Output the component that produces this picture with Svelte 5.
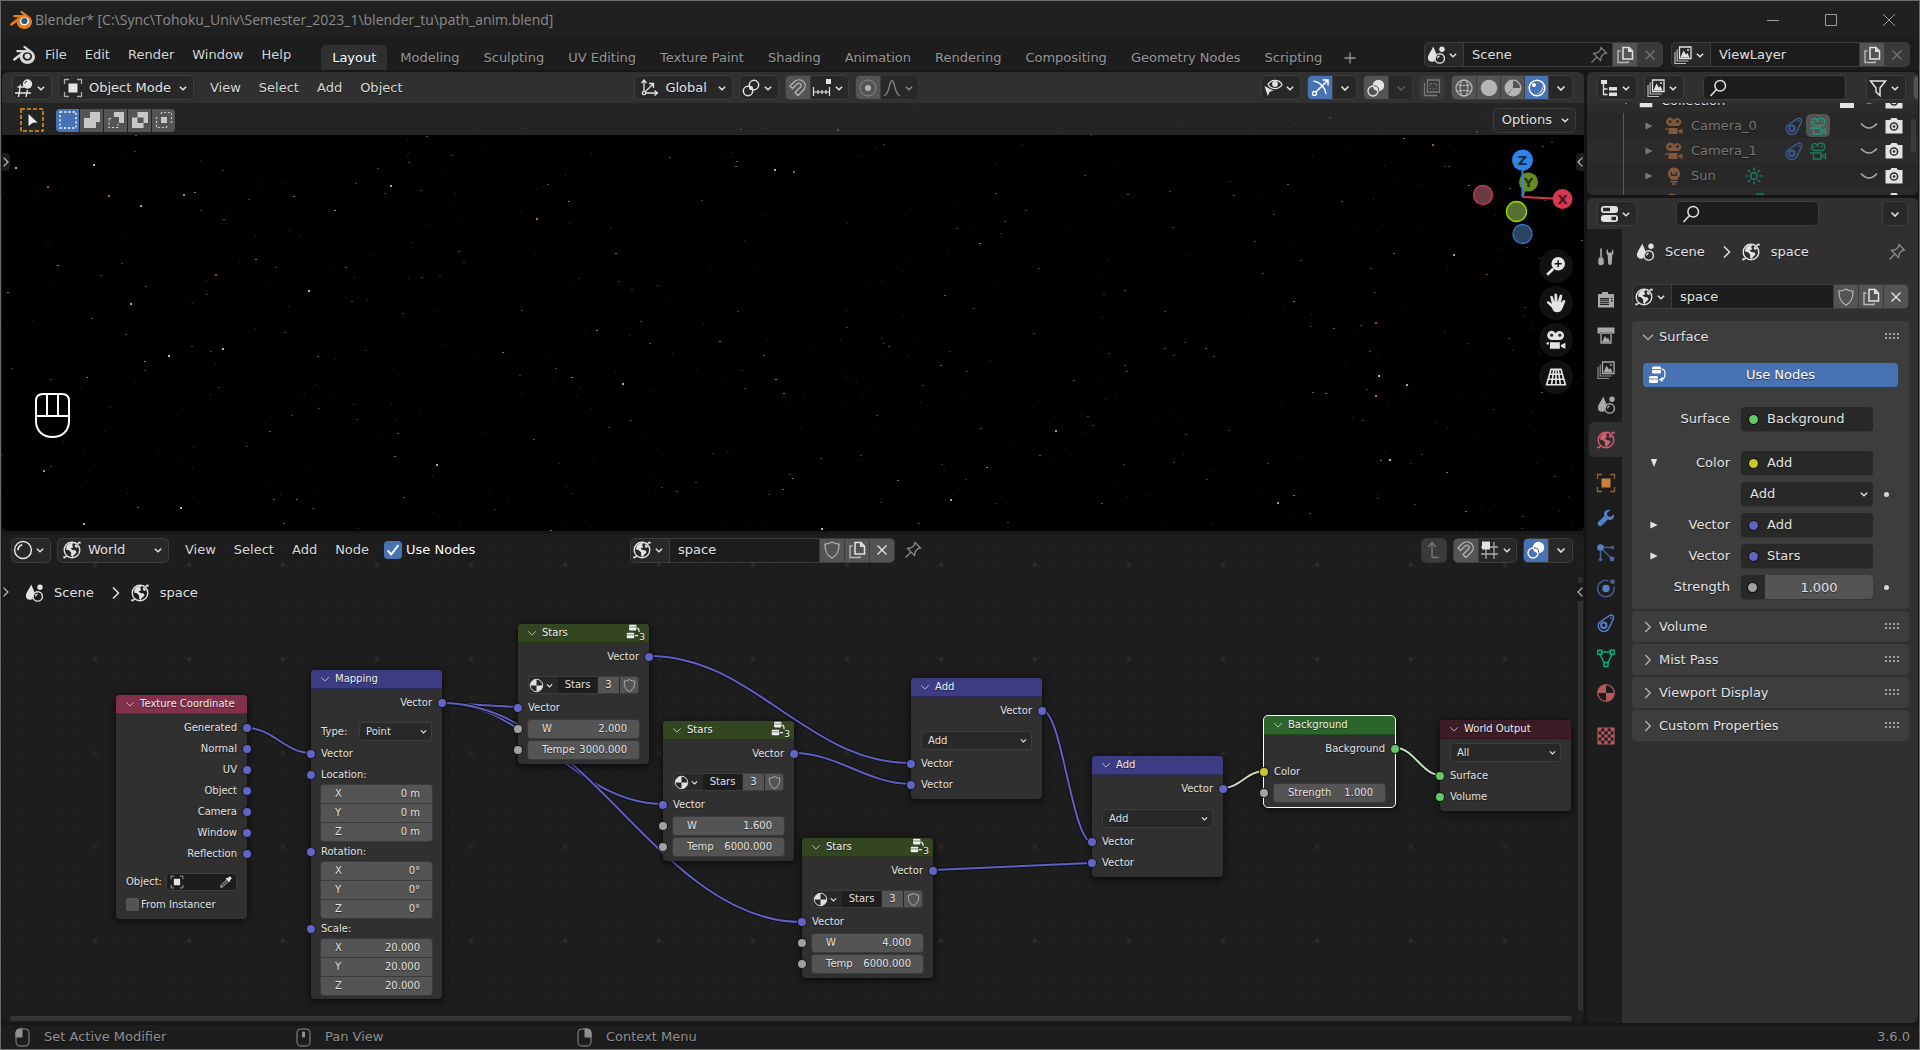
<script>
  const BLENDER =
    '<path d="M12.51 13.214c.046-.8.438-1.506 1.03-2.006a3.424 3.424 0 0 1 2.212-.79c.85 0 1.631.3 2.211.79.592.5.983 1.206 1.028 2.005.045.823-.285 1.586-.865 2.153a3.389 3.389 0 0 1-2.374.938 3.393 3.393 0 0 1-2.376-.938c-.58-.567-.91-1.33-.865-2.152M7.35 14.831c.006.314.106.922.256 1.398a7.372 7.372 0 0 0 1.593 2.757 8.227 8.227 0 0 0 2.787 2.001 8.947 8.947 0 0 0 3.66.76 8.964 8.964 0 0 0 3.657-.772 8.285 8.285 0 0 0 2.785-2.01 7.428 7.428 0 0 0 1.592-2.762 6.964 6.964 0 0 0 .25-3.074 7.123 7.123 0 0 0-1.016-2.779 7.764 7.764 0 0 0-1.852-2.043h.002L13.566 2.55l-.02-.015c-.492-.378-1.319-.376-1.86.002-.547.382-.609 1.015-.123 1.415l-.001.001 3.126 2.543-9.53.01h-.013c-.788.001-1.545.518-1.695 1.172-.154.665.38 1.217 1.2 1.22V8.9l4.83-.01-8.62 6.617-.034.025c-.813.622-1.075 1.658-.563 2.313.52.667 1.625.668 2.447.004L7.414 14s-.069.52-.063.831zm12.09 1.741c-.97.988-2.326 1.548-3.795 1.55-1.47.004-2.827-.552-3.797-1.538a4.51 4.51 0 0 1-1.036-1.622 4.282 4.282 0 0 1 .282-3.519 4.702 4.702 0 0 1 1.153-1.371c.942-.768 2.141-1.183 3.396-1.185 1.256-.002 2.455.41 3.398 1.175.48.391.87.854 1.152 1.367a4.28 4.28 0 0 1 .522 1.706 4.236 4.236 0 0 1-.239 1.811 4.54 4.54 0 0 1-1.035 1.626"';
  const L = 'fill="none" stroke="currentColor"';
  const F = 'fill="currentColor" stroke="none"';

  // 20 x 20 icon set
  const icons = {
    blender: `<g transform="scale(.833)">${BLENDER} fill="currentColor"/></g>`,
    blenderColor: `<g transform="scale(.833)"><circle cx="15.7" cy="13.1" r="5.5" fill="#f4f4f4"/>${BLENDER} fill="#ee7d11"/><circle cx="15.7" cy="13.2" r="3.3" fill="#265787"/></g>`,
    down: `<path d="M6.500 8.500 10 12l3.500-3.500" ${L} stroke-width="1.600"/>`,
    fold: `<path d="M4.500 7.500 10 13l5.500-5.500" ${L} stroke-width="1.400"/>`,
    right: `<path d="M7 4.500 12.500 10 7 15.500" ${L} stroke-width="1.500"/>`,
    left: `<path d="M13 4.500 7.500 10l5.500 5.500" ${L} stroke-width="1.500"/>`,
    triRight: `<path d="M5.500 5.500v9l9-4.500z" ${F}/>`,
    triDown: `<path d="M6 5h8l-4 10z" ${F}/>`,
    close: `<path d="m5 5 10 10M15 5 5 15" ${L} stroke-width="1.500"/>`,
    plus: `<path d="M10 4.500v11M4.500 10h11" ${L} stroke-width="1.300"/>`,
    scene: `<path d="M7.200 1.500C8.800 5.500 11 8.800 10.600 11.800c-1.400.9-2.100 2.500-1.900 4.500C4.800 17.600 1.800 16 1.900 12.700 2.100 9.200 5.700 5.500 7.200 1.500z" ${F}/><circle cx="16" cy="4.300" r="2.700" ${F}/><circle cx="13.700" cy="13.400" r="4.700" ${L} stroke-width="1.400"/><path d="M11.600 13.400a2.200 2.200 0 0 1 2-2.200" ${L} stroke-width="1.200"/>`,
    world: `<circle cx="10" cy="10" r="7.800" ${L} stroke-width="1.400"/><path d="M4.400 6.500C6 3.800 8.500 2.800 11 3.200l-.8 2 1 2-2.700 1.200 2 1.600 3.200.5.800 2-2.300 2.200-1.700 2.400-1.500-1.700.2-3-2.600-2.300-2.400-.4zM13.500 4.200l2.700 2.600-2 1.200-1.600-1.700z" ${F}/><path d="M15.300 4c1.800-2.200 3.600-2.600 2.400-.2M4.700 16C3 17.900.9 18.700 2.300 16.200" ${L} stroke-width="1.300"/>`,
    grid3d: `<path d="M3.500 9H10M1 15h16M6.500 6.500 4.500 19M13.500 12l-1.500 7" ${L} stroke-width="1.400"/><circle cx="13.500" cy="6" r="4.700" ${F}/><path d="M10.800 5.500q.5-2 2.200-2.300" fill="none" stroke="#282828" stroke-width="1"/>`,
    object: `<path d="M5.500 5.500h9v9h-9z" ${F}/><path d="M1.500 6V1.500H6M14 1.500h4.500V6M18.500 14v4.500H14M6 18.500H1.500V14" ${L} stroke-width="1.300" opacity=".7"/>`,
    axes: `<path d="M5 15V2.500M2.500 5 5 2l2.500 3M5 15h13M15.500 12.500 18.500 15l-3 2.500M6.500 13.500 14 6M10 5.500h4.500V10" ${L} stroke-width="1.300"/><circle cx="5" cy="15" r="1.700" fill="#282828" stroke="currentColor" stroke-width="1.300"/>`,
    pivot: `<circle cx="13" cy="7" r="4.700" ${L} stroke-width="1.500"/><circle cx="7" cy="13" r="4.700" ${L} stroke-width="1.500"/><circle cx="10" cy="10" r="2" ${F}/>`,
    magnet: `<path d="m2 8 4.500-4.500c6-5 14.500 2 9 8.500L10 17.500 7 14.500l5.500-5.500c2-2.800-1-5-3.200-3.200L4.500 10.500z" ${L} stroke-width="1.300"/>`,
    snap: `<path d="M1.500 9v9M6 12v4M10 12v4M14 12v4M17.500 9v9M1.500 14h16" ${L} stroke-width="1.200"/><path d="M14 1h5v5h-5z" ${F}/>`,
    propEdit: `<circle cx="10" cy="10" r="8" ${L} stroke-width="1.300" opacity=".4"/><circle cx="10" cy="10" r="3" ${F}/>`,
    falloff: `<path d="M2 17.500C7.500 17.500 7 2.500 10 2.500s2.500 15 8 15" ${L} stroke-width="1.300"/>`,
    visible: `<path d="M5 6.500c3-5.500 11-5.500 14 0-3 5.500-11 5.500-14 0z" ${L} stroke-width="1.400"/><circle cx="12" cy="6" r="2.900" ${F}/><path d="m1.500 8 9 4.700-3.800 1-1.900 4.300z" ${F}/>`,
    gizmo: `<circle cx="4.500" cy="15.500" r="2" ${L} stroke-width="1.400"/><path d="M6 14 17.500 2.500M12.500 2H18v5.500M3.500 3c6.500 1 11.500 6 12.500 13" ${L} stroke-width="1.500"/>`,
    overlay: `<circle cx="12.500" cy="7.500" r="5.700" ${F}/><circle cx="7" cy="13" r="5" ${L} stroke-width="1.400"/><path d="M8 7.800c3.500 0 4.800 2 4.600 4.800" fill="none" stroke="#4a4a4a" stroke-width="1"/>`,
    xray: `<path d="M5.500 2h12v12h-12z" ${L} stroke-width="1.300"/><path d="M2.500 5v12.500H15" ${L} stroke-width="1.300"/><path d="M8 5.500h6.500V11H8z" ${L} stroke-width="1" stroke-dasharray="2 1.500"/>`,
    wire: `<circle cx="10" cy="10" r="8" ${L} stroke-width="1.300"/><ellipse cx="10" cy="10" rx="4" ry="8" ${L} stroke-width="1.200"/><path d="M3 6.500q7 2 14 0M2.500 13.500q7.500-2 15 0" ${L} stroke-width="1.200"/>`,
    solid: `<circle cx="10" cy="10" r="8.300" ${F}/>`,
    matprev: `<circle cx="10" cy="10" r="7.800" ${L} stroke-width="1.300"/><path d="M10 2.500A7.500 7.500 0 0 0 4.500 15.500L10 10zM10 10h7.500a7.500 7.500 0 0 1-12 6z" ${F}/>`,
    rendered: `<circle cx="10" cy="10" r="7.800" ${L} stroke-width="1.500"/><circle cx="7" cy="7" r="2" ${F}/><path d="M16 6c1.500 5-2 10.500-8.500 10.500 5-.5 8.500-4.500 8.500-10.500z" ${F}/>`,
    duplicate: `<path d="M8 2.500h6L17.500 6v8H8z" ${L} stroke-width="1.500"/><path d="M13 2.500V7h4.500z" ${F}/><path d="M5.500 6H3v11.500h10V16" ${L} stroke-width="1.400" opacity=".7"/>`,
    layers: `<path d="M6.500 2h11.500v11.500H6.500z" ${L} stroke-width="1.300"/><path d="m7.500 12.500 3-7 2.500 4 1.500-1.500 2 4.500z" ${F}/><circle cx="15" cy="5" r="1" ${F}/><path d="M4.200 4.500v11.500H15.500M2 7v11.500h11" ${L} stroke-width="1.200" opacity=".8"/>`,
    pin: `<path d="m12 2.500 5.500 5.500-2.500.5-2.700 3-.8 4L4.500 8.500l4-.8 3-2.700zM8 12l-5.500 5.500" ${L} stroke-width="1.300"/>`,
    outliner: `<path d="M2 2h6v4H2z" ${F}/><path d="M4.500 6v10.500h4M4.500 11h4" ${L} stroke-width="1.300"/><path d="M10 9h8v3.500h-8zM10 14.500h8V18h-8z" ${F}/>`,
    search: `<circle cx="12.200" cy="7.800" r="5.300" ${L} stroke-width="1.500"/><path d="M8.500 11.500 2.500 18" ${L} stroke-width="1.500"/>`,
    filter: `<path d="M2.500 3h15l-5.500 7v7.500L8 14v-4z" ${L} stroke-width="1.500"/>`,
    newcol: `<path d="M3 3h6v5H3zM5 8v9h9M12 12h6v6h-6z" ${L} stroke-width="1.500"/>`,
    boxicon: `<path d="M2 3h16v3H2zM3 7h14v10H3z" ${F}/>`,
    movie: `<path d="M6 1.500a4 4 0 0 1 3.700 2.300A4.100 4.100 0 1 1 14 10H6.500A4.200 4.200 0 0 1 6 1.500zM4.500 12h9v6h-9zM14.500 14.500l4-2v5.500l-4-1.800zM1.500 12h2v2h-2z" ${F}/><circle cx="6" cy="5.600" r="1.400" fill="#2b2b2b"/><circle cx="13.500" cy="5.600" r="1.400" fill="#2b2b2b"/>`,
    movieLine: `<path d="M6 2.500a3.500 3.500 0 0 1 3.500 2.500A3.700 3.700 0 1 1 14 9.500H6.500A3.600 3.600 0 0 1 6 2.500zM5.500 12h7.500v6H5.500zM13.500 15l4-2v4.500l-4-2zM2 12h3" ${L} stroke-width="1.300"/><circle cx="6" cy="6" r="1" ${F}/><circle cx="13.500" cy="5.600" r="1" ${F}/>`,
    constraint: `<path d="M3.200 9.500 13.500 2.600c3-1.600 5 .8 3.800 3.500L12.500 16A5.600 5.600 0 0 1 3.200 9.500z" ${L} stroke-width="1.400"/><circle cx="7.800" cy="12.200" r="2.700" ${L} stroke-width="2"/><circle cx="15" cy="4.900" r=".9" ${F}/>`,
    bulb: `<path d="M10 1.500a6.200 6.200 0 0 1 3.800 11l-.8 1.500H7l-.8-1.500A6.200 6.200 0 0 1 10 1.500zM6.500 15h7v1.400h-7zM8 17.300h4v1.500H8z" ${F}/><path d="M7.500 6v3.500h5V6M9.200 9.500V8M10.800 9.500V8" fill="none" stroke="#2b2b2b" stroke-width="1.200"/>`,
    sun: `<circle cx="10" cy="10" r="3.300" ${L} stroke-width="1.500"/><path d="M10 1.500v3M10 15.500v3M1.500 10h3M15.500 10h3M4 4l2 2M14 14l2 2M16 4l-2 2M6 14l-2 2" ${L} stroke-width="1.600"/>`,
    arc: `<path d="M5 3c8-1 11 3 11 9l-4 4c1-7-2-9-7-9z" ${F}/>`,
    curve: `<path d="M4 3h6v4H4zM10 5c5 0 6 3 6 9M14 8h4v5" ${L} stroke-width="1.500"/>`,
    closedEye: `<path d="M2 7.500q8 9 16 0" ${L} stroke-width="1.600"/>`,
    photo: `<path d="M1.500 4h4.500L7.500 2h5L14 4h4.500v13.500h-17z" ${F}/><circle cx="10" cy="10.500" r="3.600" fill="none" stroke="#2b2b2b" stroke-width="1.500"/><circle cx="10" cy="10.500" r="1.300" fill="#2b2b2b"/>`,
    check: `<path d="m4 10.500 4 4.500 8-10.500" ${L} stroke-width="2.200"/>`,
    props: `<rect x="2" y="2" width="17" height="7" rx="3" ${F}/><rect x="2" y="11" width="17" height="7" rx="3" ${F}/><path d="M4 3.800h7v3.400H4zM12.500 12.800h4.500v3.400h-4.500z" fill="#282828"/>`,
    shield: `<path d="M10 2c2.500 1.700 4.500 2 7 2.200 0 7-1.500 11-7 14-5.500-3-7-7-7-14C5.500 4 7.500 3.700 10 2z" ${L} stroke-width="1.300"/>`,
    nodes: `<rect x="5" y="1.500" width="9" height="7" rx="1.500" ${F}/><rect x="2" y="11" width="9" height="7" rx="1.500" ${F}/><path d="M5 4.500h9M2 14h9" stroke="#444" stroke-width=".7"/><path d="M14.500 4c3 0 3.500 1.500 3.500 4.500 0 4-1 6-3.500 6.500M12 14.500h3.500M16 12.500l-3 2 2.500 2" ${L} stroke-width="1.200"/>`,
    nodetree: `<rect x="4" y="1" width="10" height="7.500" rx="1.500" ${F}/><rect x="1" y="11.500" width="10" height="7.500" rx="1.500" ${F}/><path d="M4 4h10M1 14.500h10" stroke="#344621" stroke-width=".8"/><path d="M15 5.500q2.500.5 2.500 5M12 15.500h4" ${L} stroke-width="1.500"/>`,
    tool: `<path d="M5 1.500v9" ${L} stroke-width="1.600"/><path d="M3 10.500h4l.7 2.500v4q-2.700 2.500-5.400 0v-4zM12 2v3.500h4V2q3 3 .2 6.500L15.800 17q-1.800 2.300-3.600 0l-.5-8.500Q9 5 12 2z" ${F}/>`,
    render: `<path d="M6 2h6v2h6v13.500H2V4h4z" ${F}/><path d="M4 8h9v7H4z" fill="#1d1d1d"/><path d="M4 9.800h9M4 11.600h9M4 13.400h9" stroke="currentColor" stroke-width=".8"/><path d="M15 8.500h1.500M15 11h1.500" stroke="#1d1d1d" stroke-width="1.500"/>`,
    output: `<path d="M1.500 2.500h17v6h-2.500V7H4v1.500H1.500z" ${F}/><path d="M5 8h10v10H5z" ${L} stroke-width="1.300"/><path d="m6 17 3-6 2 3 1-1.500 2 4.500z" ${F}/>`,
    wrench: `<path d="M17.800 6.500 14.500 9l-3-1-.5-3 3.300-2.800C10.500.8 7 4 8.300 8L2.200 14c-1.800 2.400 1 5.500 3.600 3.600L11.800 11.500c4.200 1.500 7-1.500 6-5z" ${F}/>`,
    particles: `<circle cx="4.500" cy="4.500" r="3.300" ${F}/><path d="M7 4.500h8M4.500 7v8M7 7l8.500 8.500" ${L} stroke-width="1.400" opacity=".7"/><circle cx="16.500" cy="4.500" r="1.800" ${F} opacity=".7"/><circle cx="4.500" cy="16.500" r="1.800" ${F} opacity=".7"/><circle cx="16" cy="16" r="2.400" ${F} opacity=".8"/>`,
    physics: `<circle cx="10" cy="10.500" r="3.700" ${F}/><path d="M12.500 2.800A8.200 8.200 0 1 0 17.800 8.500" ${L} stroke-width="1.400" opacity=".7"/><circle cx="16.500" cy="3.700" r="2.300" ${F} opacity=".7"/>`,
    mesh: `<path d="M5.500 4h9M4 6.500l4.500 9M16 6.500l-4.500 9" ${L} stroke-width="1.400"/><path d="M1.800 2.200h4v4h-4zM14.200 2.200h4v4h-4zM8 14.500h4v4H8z" ${L} stroke-width="1.400"/>`,
    material: `<circle cx="10" cy="10" r="8.300" ${L} stroke-width="1.300"/><path d="M10 2v8H2a8 8 0 0 1 8-8zM10 10h8a8 8 0 0 1-8 8z" ${F}/>`,
    texture: `<path d="M2 2h16v16H2z" ${L} stroke-width="1.200"/><path d="M2 2h3.200v3.200H2zM8.400 2h3.200v3.200H8.400zM14.800 2H18v3.200h-3.200zM5.200 5.200h3.200v3.200H5.200zM11.600 5.200h3.200v3.200h-3.200zM2 8.400h3.200v3.200H2zM8.400 8.400h3.200v3.200H8.400zM14.800 8.400H18v3.200h-3.200zM5.200 11.600h3.200v3.200H5.200zM11.600 11.600h3.200v3.200h-3.200zM2 14.800h3.200V18H2zM8.400 14.800h3.200V18H8.400zM14.800 14.800H18V18h-3.200z" ${F}/>`,
    shader: `<circle cx="10" cy="10" r="8.400" ${L} stroke-width="1.500"/><path d="M5 9.500Q5.500 6 8.500 5" ${L} stroke-width="1.800" stroke-linecap="round"/>`,
    up: `<path d="M8 17.500V3M4 7l4-4.500L12 7M8 17.500h6.500" ${L} stroke-width="1.400"/>`,
    gridSnap: `<path d="M1 7h17M1 14h17M6 8v11M14 2v17" ${L} stroke-width="1.300" opacity=".7"/><path d="M2 1.500h8v8H2z" ${F}/>`,
    dropper: `<path d="M12 4.500 15 2q3 0 3 3l-2.500 3 .5 1-1.500 1.500-5-5L11 4z" ${F}/><path d="m11 7-8 8-.5 2.500L5 17l8-8" ${L} stroke-width="1.300"/>`,
    zoom: `<circle cx="12" cy="8" r="6.200" ${F}/><path d="m7.500 12.500-5.500 5.500" ${L} stroke-width="2.400"/><path d="M12 4.800v6.400M8.800 8h6.400" stroke="#111" stroke-width="1.300"/>`,
    hand: `<path d="M6.500 14.500 1.500 9.500q.8-1.800 2.800-.3L6.300 11 4.700 4q1.500-1.500 2.300.2L8.700 9 8.600 2q1.200-1.400 2.300 0l.6 7L13.500 2.800q1.500-1.200 2.200.4L14.500 10l2-2.500q1.700-.8 2 1L16 14.500q-1.500 4-5 4-3.500 0-4.500-4z" ${F}/>`,
    persp: `<path d="M5.500 3h9l4 14h-17zM10 3v14M4 7.500h12M3 12h14M8 3 6 17M12 3l2 14" ${L} stroke-width="1.500"/>`,
    selSet: `<path d="M2 2h16v16H2z" ${L} stroke-width="1.300" stroke-dasharray="2.200 2"/>`,
    selAdd: `<path d="M8 2h10v10h-4v6H2V8h6z" ${F}/>`,
    selSub: `<path d="M8 2h10v11h-5V7H8z" ${F}/><path d="M3 8.500v9h9V14M3 8.500h3" ${L} stroke-width="1.200" stroke-dasharray="2.200 1.800"/>`,
    selXor: `<path fill-rule="evenodd" d="M7.500 2H18v11h-4.500v5H2V7.500h5.500zM7.500 7.500V13h6V7.500z" ${F}/>`,
    selAnd: `<path d="M7 7h6v6H7z" ${F}/><path d="M7.500 4V2.500h10v10H16M12.500 16v1.500h-10v-10H4" ${L} stroke-width="1.200" stroke-dasharray="2.200 1.800"/>`
  };

  const menus = ['File', 'Edit', 'Render', 'Window', 'Help'];
  const workspaces = ['Layout', 'Modeling', 'Sculpting', 'UV Editing', 'Texture Paint', 'Shading', 'Animation', 'Rendering', 'Compositing', 'Geometry Nodes', 'Scripting'];

  // deterministic star field
  let seed = 77;
  const rnd = () => ((seed = (seed * 16807) % 2147483647) / 2147483647);
  const stars = Array.from({ length: 1500 }, () => {
    const b = rnd();
    const orange = rnd() < 0.25;
    const v = Math.round(26 + 64 * b * b + 100 * b ** 16);
    return {
      x: Math.floor(rnd() * 1900),
      y: Math.floor(rnd() * 620),
      w: b > 0.7 ? 2 : 1,
      h: b > 0.97 ? 2 : 1,
      c: orange ? `rgb(${v},${Math.round(v * 0.6)},${Math.round(v * 0.2)})` : `rgb(${v},${v},${v})`
    };
  });

  const V = '#6363c7', G = '#a1a1a1', Y = '#c7c729', S = '#63c763';
  const out = (label, c = V) => ({ t: 'out', label, c });
  const inp = (label, c = V) => ({ t: 'in', label, c });
  const starsNode = (x, y, w, tl, tv) => ({
    x, y, title: 'Stars', head: 'group', tree: true,
    rows: [out('Vector'), { t: 'id' }, inp('Vector'), { t: 'num', label: 'W', v: w, c: G }, { t: 'num', label: tl, v: tv, c: G }]
  });
  const addNode = (x, y) => ({
    x, y, title: 'Add', head: 'vector',
    rows: [out('Vector'), { t: 'sel', v: 'Add' }, inp('Vector'), inp('Vector')]
  });
  const nodes = [
    {
      x: 114, y: 161, title: 'Texture Coordinate', head: 'input',
      rows: [...['Generated', 'Normal', 'UV', 'Object', 'Camera', 'Window', 'Reflection'].map((l) => out(l)), { t: 'object' }, { t: 'check' }]
    },
    {
      x: 309, y: 136, title: 'Mapping', head: 'vector',
      rows: [
        out('Vector'), { t: 'sel', label: 'Type:', v: 'Point' }, inp('Vector'),
        inp('Location:'), { t: 'vec', v: ['0 m', '0 m', '0 m'] },
        inp('Rotation:'), { t: 'vec', v: ['0°', '0°', '0°'] },
        inp('Scale:'), { t: 'vec', v: ['20.000', '20.000', '20.000'] }
      ]
    },
    starsNode(516, 90, '2.000', 'Tempe', '3000.000'),
    starsNode(661, 187, '1.600', 'Temp', '6000.000'),
    starsNode(800, 304, '4.000', 'Temp', '6000.000'),
    addNode(909, 144),
    addNode(1090, 222),
    {
      x: 1262, y: 182, title: 'Background', head: 'shader', active: true,
      rows: [out('Background', S), inp('Color', Y), { t: 'num', label: 'Strength', v: '1.000', c: G }]
    },
    {
      x: 1438, y: 186, title: 'World Output', head: 'output',
      rows: [{ t: 'sel', v: 'All' }, inp('Surface', S), inp('Volume', S)]
    }
  ];

  const links = [
    [245, 194, 309, 219], [440, 169, 516, 173], [440, 169, 661, 270], [440, 169, 800, 388],
    [647, 122, 909, 229], [792, 219, 909, 250], [931, 336, 1090, 329], [1040, 176, 1090, 308],
    [1221, 254, 1262, 237, 'url(#toColor)'], [1394, 214, 1438, 241, '#c6e3c6']
  ];
  // flat links get short handles, so they come out nearly straight
  const curve = ([a, b, c, d]) => {
    const slope = Math.abs((d - b) / (c - a));
    const h = (c - a) * 0.4 * Math.min(1, slope * 3.5);
    return `M${a} ${b}C${a + h} ${b} ${c - h} ${d} ${c} ${d}`;
  };
  const minor = [9, 28, 47, 66, 85].flatMap((x) => [9, 28, 47, 66, 85].map((y) => [x, y]));

  const tabGroups = [
    [['tool', '#a9a9a9', 'Tool']],
    [['render', '#a9a9a9', 'Render'], ['output', '#a9a9a9', 'Output'], ['layers', '#a9a9a9', 'View Layer'], ['scene', '#a9a9a9', 'Scene'], ['world', '#d0606c', 'World']],
    [['object', '#c9813f', 'Object'], ['wrench', '#5680c8', 'Modifiers'], ['particles', '#5680c8', 'Particles'], ['physics', '#5680c8', 'Physics'], ['constraint', '#5680d0', 'Constraints'], ['mesh', '#0fae7e', 'Data'], ['material', '#b65862', 'Material']],
    [['texture', '#b65862', 'Texture']]
  ];
  const surfaceRows = [
    { label: 'Surface', v: 'Background', c: S, space: true },
    { label: 'Color', v: 'Add', c: Y, tri: 'triDown' },
    { pick: 'Add', dot: true },
    { label: 'Vector', v: 'Add', c: V, tri: 'triRight' },
    { label: 'Vector', v: 'Stars', c: V, tri: 'triRight' },
    { label: 'Strength', num: '1.000', c: G, dot: true }
  ];
  const closed = ['Volume', 'Mist Pass', 'Viewport Display', 'Custom Properties'];
  const hints = [['l', 'Set Active Modifier'], ['m', 'Pan View'], ['r', 'Context Menu']];
</script>

{#snippet ic(name, size = 20)}
  <svg class="ic" width={size} height={size} viewBox="0 0 20 20" aria-hidden="true">{@html icons[name]}</svg>
{/snippet}

{#snippet drop(name, label)}
  <div class="grp"><button class="cell drop" aria-label={label}>{@render ic(name)}{@render ic('down', 18)}</button></div>
{/snippet}

{#snippet arrowCell(label, dim = false)}
  <button class="cell sq" class:dim aria-label={label}>{@render ic('down', 20)}</button>
{/snippet}

<div class="app">
  <header class="title">
    {@render ic('blenderColor', 22)}
    <h1>Blender* [C:\Sync\Tohoku_Univ\Semester_2023_1\blender_tu\path_anim.blend]</h1>
    <div class="winbtns">
      <button aria-label="Minimize"><svg width="12" height="12" viewBox="0 0 12 12"><path d="M0 6.500h12" /></svg></button>
      <button aria-label="Maximize"><svg width="12" height="12" viewBox="0 0 12 12"><path d="M.5.5h11v11H.5z" /></svg></button>
      <button aria-label="Close"><svg width="12" height="12" viewBox="0 0 12 12"><path d="m0 0 12 12M12 0 0 12" /></svg></button>
    </div>
  </header>

  <div class="topbar">
    <nav class="menus main">
      <button aria-label="Blender menu">{@render ic('blender', 22)}</button>
      {#each menus as m}<button>{m}</button>{/each}
    </nav>
    <nav class="tabs">
      {#each workspaces as w, i}<button class:on={i === 0}>{w}</button>{/each}
      <button class="add" aria-label="Add workspace">{@render ic('plus')}</button>
    </nav>
    <div class="topright">
      <div class="grp idtop">
        <button class="cell drop" aria-label="Browse scene">{@render ic('scene')}{@render ic('down', 18)}</button>
        <input class="field" value="Scene" aria-label="Scene name" />
        <button class="pinbtn" aria-label="Pin scene">{@render ic('pin')}</button>
        <button class="cell sq grey" aria-label="New scene">{@render ic('duplicate')}</button>
        <button class="cell sq halfgrey" aria-label="Delete scene">{@render ic('close', 18)}</button>
      </div>
      <div class="grp idtop">
        <button class="cell drop" aria-label="Browse view layer">{@render ic('layers')}{@render ic('down', 18)}</button>
        <input class="field" value="ViewLayer" aria-label="View layer name" />
        <button class="cell sq grey" aria-label="New view layer">{@render ic('duplicate')}</button>
        <button class="cell sq halfgrey" aria-label="Remove view layer">{@render ic('close', 18)}</button>
      </div>
    </div>
  </div>

  <main>
    <div class="left">
      <section class="area viewport">
        <svg class="sky" aria-hidden="true">
          {#each stars as s}<rect x={s.x} y={s.y} width={s.w} height={s.h} fill={s.c} />{/each}
        </svg>
        <div class="bar header3d">
          <div class="side">
            {@render drop('grid3d', 'Editor type')}
            <label class="pick mode">{@render ic('object')}<select aria-label="Mode"><option>Object Mode</option></select>{@render ic('down', 18)}</label>
            <nav class="menus"><button>View</button><button>Select</button><button>Add</button><button>Object</button></nav>
          </div>
          <div class="side">
            <label class="pick orient">{@render ic('axes')}<select aria-label="Orientation"><option>Global</option></select>{@render ic('down', 18)}</label>
            {@render drop('pivot', 'Pivot point')}
            <div class="grp">
              <button class="cell sq grey soft" aria-label="Snap">{@render ic('magnet')}</button>
              <button class="cell drop" aria-label="Snap to">{@render ic('snap')}{@render ic('down', 18)}</button>
            </div>
            <div class="grp faint">
              <button class="cell sq grey soft" aria-label="Proportional editing">{@render ic('propEdit')}</button>
              <button class="cell drop dimmer" aria-label="Falloff">{@render ic('falloff')}{@render ic('down', 18)}</button>
            </div>
          </div>
          <div class="side end">
            {@render drop('visible', 'Visibility')}
            <div class="grp"><button class="cell sq blue" aria-label="Gizmos">{@render ic('gizmo')}</button>{@render arrowCell('Gizmo options')}</div>
            <div class="grp faint"><button class="cell sq grey" aria-label="Overlays">{@render ic('overlay')}</button>{@render arrowCell('Overlay options', true)}</div>
            <div class="grp faint"><button class="cell sq halfgrey" aria-label="X-ray">{@render ic('xray')}</button></div>
            <div class="grp">
              <button class="cell sq grey soft" aria-label="Wireframe">{@render ic('wire')}</button>
              <button class="cell sq grey soft" aria-label="Solid">{@render ic('solid')}</button>
              <button class="cell sq grey soft" aria-label="Material preview">{@render ic('matprev')}</button>
              <button class="cell sq blue" aria-label="Rendered">{@render ic('rendered')}</button>
              {@render arrowCell('Shading options')}
            </div>
          </div>
        </div>
        <div class="toolbar">
          <button class="seltool" aria-label="Select box tool">
            <svg width="24" height="24" viewBox="0 0 24 24"><path d="M1 1h22v22H1z" fill="none" stroke="#e09a25" stroke-width="1.500" stroke-dasharray="4 2" /><path d="m8.500 6 9 8.500-4.500.3L8.500 18z" fill="#eee" /></svg>
          </button>
          <div class="selmodes">
            {#each [['selSet', 'Set'], ['selAdd', 'Extend'], ['selSub', 'Subtract'], ['selXor', 'Invert'], ['selAnd', 'Intersect']] as [n, l], i}
              <button class:blue={i === 0} aria-label={l}>{@render ic(n)}</button>
            {/each}
          </div>
          <button class="options">Options {@render ic('down', 18)}</button>
        </div>
        <div class="scene3d">
          <button class="edge e-left" aria-label="Show toolbar">{@render ic('right', 16)}</button>
          <button class="edge e-right" aria-label="Show sidebar">{@render ic('left', 16)}</button>
          <svg class="gizmo" width="102" height="102" viewBox="0 0 102 102" role="img" aria-label="View axes">
            <circle cx="11" cy="46" r="9.500" fill="#6b3a42" stroke="#c93a50" stroke-width="1.300" />
            <path d="M50.500 47 56 33" stroke="#6a8f1f" stroke-width="2" />
            <circle cx="56.500" cy="33" r="9.500" fill="#668c1e" />
            <path d="m50.500 48 40 2" stroke="#d5384f" stroke-width="2" />
            <circle cx="90.500" cy="50" r="10" fill="#d5384f" />
            <path d="M50.500 48V11" stroke="#2d84e6" stroke-width="2" />
            <circle cx="50.500" cy="11" r="10.500" fill="#2d84e6" />
            <circle cx="44.500" cy="62.500" r="10" fill="#58702f" stroke="#8bdc00" stroke-width="1.400" />
            <circle cx="50.500" cy="85" r="9.500" fill="#2b4461" stroke="#2f75c9" stroke-width="1.300" />
            <g text-anchor="middle"><text x="50.500" y="16">Z</text><text x="56.500" y="38">Y</text><text x="90.500" y="55">X</text></g>
          </svg>
          <div class="nav">
            <button aria-label="Zoom">{@render ic('zoom', 22)}</button>
            <button aria-label="Pan">{@render ic('hand', 22)}</button>
            <button aria-label="Camera view">{@render ic('movie', 22)}</button>
            <button aria-label="Perspective">{@render ic('persp', 22)}</button>
          </div>
          <svg class="mouse" width="35" height="45" viewBox="0 0 35 45" fill="none" stroke="#fff" stroke-width="2" aria-hidden="true">
            <path d="M8 1h19q7 0 7 7v20C34 38 27 44 17.500 44S1 38 1 28V8q0-7 7-7zM1 23h33M12 1v22M23 1v22" />
          </svg>
        </div>
      </section>

      <section class="area nodeed">
        <svg class="gridbg" aria-hidden="true">
          <defs>
            <pattern id="dots" x="140" y="78" width="94" height="94" patternUnits="userSpaceOnUse">
              {#each minor as [x, y]}<rect x={x - 1} y={y - 1} width="3" height="3" fill="#212121" />{/each}
              <rect x="45" y="45" width="4" height="4" fill="#292929" />
            </pattern>
            <linearGradient id="toColor"><stop offset="0" stop-color="#c9c9e6" /><stop offset="1" stop-color="#e0e0a8" /></linearGradient>
          </defs>
          <rect width="100%" height="100%" fill="url(#dots)" />
          <g fill="none" stroke-linecap="round">
            {#each links as l}
              <path d={curve(l)} stroke="#101010" stroke-width="4" />
              <path d={curve(l)} stroke={l[4] ?? '#605fc4'} stroke-width="2" />
            {/each}
          </g>
        </svg>

        <div class="bar">
          <div class="side">
            {@render drop('shader', 'Editor type')}
            <label class="pick wtype">{@render ic('world')}<select aria-label="Shader type"><option>World</option></select>{@render ic('down', 18)}</label>
            <nav class="menus"><button>View</button><button>Select</button><button>Add</button><button>Node</button></nav>
            <label class="usenodes"><input type="checkbox" checked /><span class="tick">{@render ic('check', 18)}</span>Use Nodes</label>
          </div>
          <div class="side">
            <div class="grp idnode">
              <button class="cell drop" aria-label="Browse world">{@render ic('world')}{@render ic('down', 18)}</button>
              <input class="field" value="space" aria-label="World name" />
              <button class="cell sq grey soft" aria-label="Fake user">{@render ic('shield')}</button>
              <button class="cell sq grey" aria-label="New world">{@render ic('duplicate')}</button>
              <button class="cell sq grey" aria-label="Unlink world">{@render ic('close', 18)}</button>
            </div>
            <button class="plain dimpin" aria-label="Pin">{@render ic('pin')}</button>
          </div>
          <div class="side end">
            <div class="grp faint"><button class="cell sq halfgrey" aria-label="Parent node tree">{@render ic('up')}</button></div>
            <div class="grp">
              <button class="cell sq grey soft" aria-label="Snap">{@render ic('magnet')}</button>
              <button class="cell drop" aria-label="Snap to">{@render ic('gridSnap')}{@render ic('down', 18)}</button>
            </div>
            <div class="grp"><button class="cell sq blue" aria-label="Overlays">{@render ic('overlay')}</button>{@render arrowCell('Overlay options')}</div>
          </div>
        </div>
        <div class="crumbs nodecrumbs">
          {@render ic('scene')}<span>Scene</span>{@render ic('right')}{@render ic('world')}<span>space</span>
        </div>
        <button class="edge e-left" aria-label="Show toolbar">{@render ic('right', 16)}</button>
        <button class="edge e-right" aria-label="Show sidebar">{@render ic('left', 16)}</button>
        <div class="vscroll"></div>
        <div class="hscroll"></div>

        {#each nodes as n}
          <article class="node" class:active={n.active} style:left="{n.x}px" style:top="{n.y}px">
            <header class={n.head}>
              {@render ic('fold', 14)}<h2>{n.title}</h2>
              {#if n.tree}<span class="tree">{@render ic('nodetree', 15)}<small>3</small></span>{/if}
            </header>
            <div class="nbody">
              {#each n.rows as r}
                <div class="row {r.t}" class:labelled={r.t === 'sel' && r.label}>
                  {#if r.c}<i class="sock" style:background={r.c}></i>{/if}
                  {#if r.t === 'out' || r.t === 'in'}
                    <span>{r.label}</span>
                  {:else if r.t === 'sel'}
                    {#if r.label}<span class="lab">{r.label}</span>{/if}
                    <label class="npick"><select aria-label={r.label ?? n.title + ' operation'}><option>{r.v}</option></select>{@render ic('down', 15)}</label>
                  {:else if r.t === 'num'}
                    <label class="fld"><span>{r.label}</span><input value={r.v} size="1" /></label>
                  {:else if r.t === 'vec'}
                    {#each r.v as v, i}<label class="fld"><span>{'XYZ'[i]}</span><input value={v} size="1" /></label>{/each}
                  {:else if r.t === 'id'}
                    <button class="drop" aria-label="Browse node group">{@render ic('material', 15)}{@render ic('down', 15)}</button>
                    <input value="Stars" size="1" aria-label="Node group name" />
                    <button class="grey">3</button>
                    <button class="grey soft" aria-label="Fake user">{@render ic('shield', 15)}</button>
                  {:else if r.t === 'object'}
                    <span>Object:</span>
                    <button class="objfield" aria-label="Object">{@render ic('object', 14)}{@render ic('dropper', 14)}</button>
                  {:else if r.t === 'check'}
                    <label class="inst"><input type="checkbox" />From Instancer</label>
                  {/if}
                </div>
              {/each}
            </div>
          </article>
        {/each}
      </section>
    </div>

    <aside class="right">
      <section class="area outliner">
        <div class="bar">
          {@render drop('outliner', 'Editor type')}
          {@render drop('layers', 'Display mode')}
          <label class="search">{@render ic('search')}<input type="text" aria-label="Search outliner" /></label>
          {@render drop('filter', 'Filter')}
          <div class="grp"><button class="cell sq grey" aria-label="New collection">{@render ic('newcol')}</button></div>
        </div>
        <div class="list">
          <ul>
            <li class="coll"><span class="tri">{@render ic('triDown', 14)}</span>{@render ic('boxicon', 18)}<span>Collection</span><span class="vis"><i class="ck"></i>{@render ic('closedEye')}{@render ic('photo')}</span></li>
            <li><span class="tri">{@render ic('triRight', 16)}</span><span class="brown">{@render ic('movie')}</span><span class="nm">Camera_0</span><span class="cons">{@render ic('constraint')}</span><span class="green hl">{@render ic('movieLine')}</span><span class="vis">{@render ic('closedEye')}{@render ic('photo')}</span></li>
            <li><span class="tri">{@render ic('triRight', 16)}</span><span class="brown">{@render ic('movie')}</span><span class="nm">Camera_1</span><span class="cons">{@render ic('constraint')}</span><span class="green">{@render ic('movieLine')}</span><span class="vis">{@render ic('closedEye')}{@render ic('photo')}</span></li>
            <li><span class="tri">{@render ic('triRight', 16)}</span><span class="brown">{@render ic('bulb')}</span><span class="nm short">Sun</span><span class="green">{@render ic('sun')}</span><span class="vis">{@render ic('closedEye')}{@render ic('photo')}</span></li>
            <li><span class="tri">{@render ic('triRight', 16)}</span><span class="brown">{@render ic('arc')}</span><span class="nm mid"></span><span class="green">{@render ic('curve')}</span><span class="vis">{@render ic('closedEye')}{@render ic('photo')}</span></li>
          </ul>
          <i class="lscroll"></i>
        </div>
      </section>

      <section class="area props">
        <div class="bar">
          {@render drop('props', 'Editor type')}
          <label class="search">{@render ic('search')}<input type="text" aria-label="Search properties" /></label>
          <div class="grp">{@render arrowCell('Options')}</div>
        </div>
        <div class="pcols">
          <nav class="ptabs">
            {#each tabGroups as g}
              <div>
                {#each g as [n, c, l]}<button class:on={n === 'world'} aria-label={l} style:color={c}>{@render ic(n)}</button>{/each}
              </div>
            {/each}
          </nav>
          <div class="pbody">
            <div class="crumbs">
              {@render ic('scene')}<span>Scene</span>{@render ic('right')}{@render ic('world')}<span>space</span>
              <button class="plain dimpin" aria-label="Pin">{@render ic('pin')}</button>
            </div>
            <div class="grp idprop">
              <button class="cell drop" aria-label="Browse world">{@render ic('world')}{@render ic('down', 18)}</button>
              <input class="field" value="space" aria-label="World name" />
              <button class="cell sq grey soft" aria-label="Fake user">{@render ic('shield')}</button>
              <button class="cell sq grey" aria-label="New world">{@render ic('duplicate')}</button>
              <button class="cell sq grey" aria-label="Unlink world">{@render ic('close', 18)}</button>
            </div>
            <div class="panels">
              <section class="panel">
                <button class="phead">{@render ic('fold', 18)}<span>Surface</span><i class="grip"></i></button>
                <button class="big blue">{@render ic('nodes')}<span>Use Nodes</span></button>
                <div class="prows">
                  {#each surfaceRows as r}
                    <div class="prow" class:space={r.space}>
                      <span class="ptri">{#if r.tri}{@render ic(r.tri, 16)}{/if}</span>
                      <span class="plab">{r.label ?? ''}</span>
                      {#if r.pick}
                        <label class="ppick"><select aria-label="Color operation"><option>{r.pick}</option></select>{@render ic('down', 18)}</label>
                      {:else if r.num}
                        <span class="pnum"><button aria-label="Strength input"><i class="dot" style:background={r.c}></i></button><input value={r.num} size="1" aria-label="Strength" /></span>
                      {:else}
                        <button class="pval"><i class="dot" style:background={r.c}></i>{r.v}</button>
                      {/if}
                      {#if r.dot}<i class="key"></i>{/if}
                    </div>
                  {/each}
                </div>
              </section>
              {#each closed as c}
                <section class="panel"><button class="phead">{@render ic('right', 18)}<span>{c}</span><i class="grip"></i></button></section>
              {/each}
            </div>
          </div>
        </div>
      </section>
    </aside>
  </main>

  <footer class="status">
    {#each hints as [k, t]}
      <span class="hint">
        <svg width="15" height="19" viewBox="0 0 15 19" fill="none" stroke="currentColor" aria-hidden="true">
          <path d="M4.500 1h6q3.500 0 3.500 3.500v9q0 4.500-4 4.500H5q-4 0-4-4.500v-9Q1 1 4.500 1z" />
          {#if k === 'l'}<path d="M1 9V4.500Q1 1 4.500 1H7v8z" fill="currentColor" />{/if}
          {#if k === 'm'}<path d="M6.500 4h2v5h-2z" fill="currentColor" />{/if}
          {#if k === 'r'}<path d="M14 9V4.500Q14 1 10.500 1H8v8z" fill="currentColor" />{/if}
        </svg>
        {t}
      </span>
    {/each}
    <span class="ver">3.6.0</span>
  </footer>
</div>

<style>
  :global(body) { margin: 0; background: #161616; }
  * { box-sizing: border-box; }
  .app {
    min-height: 100vh; display: flex; flex-direction: column; background: #161616;
    border: 1px solid #6c6c6c; font: 13px/16px "DejaVu Sans", sans-serif; color: #e2e2e2;
    text-shadow: 0 1px 1px rgba(0, 0, 0, .5); overflow: hidden;
  }
  button, input, select { font: inherit; color: inherit; text-shadow: inherit; background: none; border: 0; padding: 0; margin: 0; border-radius: 0; outline: none; min-width: 0; }
  select { appearance: none; }
  button { display: flex; align-items: center; justify-content: center; white-space: nowrap; }
  h1, h2, ul { margin: 0; padding: 0; font: inherit; }
  .ic { display: block; flex: none; }

  .title { height: 37px; display: flex; align-items: center; background: #202020; padding-left: 9px; color: #8b8b8b; text-shadow: none; }
  .title h1 { font: 14px/20px "Open Sans", "Noto Sans", sans-serif; margin-left: 3px; }
  .winbtns { margin-left: auto; display: flex; margin-right: 1px; }
  .winbtns button { width: 58px; height: 36px; }
  .winbtns path { fill: none; stroke: #9a9a9a; }

  .topbar { height: 32px; display: flex; align-items: center; background: #1d1d1d; padding: 1px 9px 0 12px; margin-bottom: 2px; }
  .menus { display: flex; gap: 18px; margin-left: 10px; color: #d8d8d8; }
  .menus.main { margin: 0; gap: 18px; }
  .menus.main button:first-child { margin-right: -8px; }
  .tabs { display: flex; align-self: flex-end; margin-left: 30px; gap: 2px; color: #989898; }
  .tabs button { height: 25px; padding: 0 11px; border-radius: 5px 5px 0 0; }
  .tabs .on { background: #303030; color: #fff; }
  .tabs .add { padding: 0 5px; }
  .topright { display: flex; gap: 8px; margin-left: auto; }
  .idtop { width: 239px; }

  .grp { display: flex; height: 25px; border: 1px solid #3d3d3d; border-radius: 5px; overflow: hidden; background: #282828; flex: none; }
  .faint { border-color: #363636; }
  .cell { height: 100%; border-left: 1px solid #3d3d3d; }
  .cell:first-child { border-left: 0; }
  .drop { width: 38px; }
  .drop .ic:last-child { margin-left: -2px; }
  .sq { width: 24px; }
  .idtop .sq, .idnode .sq, .idprop .sq { width: 25px; }
  .grey { background: #545454; }
  .soft { color: #b4b4b4; }
  .halfgrey { background: #3a3a3a; color: #777; }
  .dim { color: #5a5a5a; }
  .dimmer { color: #8a8a8a; }
  .blue { background: #4772b3; color: #fff; }
  .field { flex: 1; background: #1d1d1d; border-left: 1px solid #3d3d3d; padding: 0 8px; width: 20px; }
  .pinbtn { background: #1d1d1d; padding: 0 3px; color: #7d7d7d; }

  main { flex: 1; display: grid; grid-template-columns: minmax(0, 1fr) 331px; gap: 3px; padding: 0 1px; }
  .left { display: grid; grid-template-rows: 459fr 489fr; gap: 3px; }
  .right { display: grid; grid-template-rows: 123px 1fr; gap: 3px; }
  .area { position: relative; border-radius: 6px; overflow: hidden; }
  .bar { position: relative; height: 31px; display: grid; grid-template-columns: 1fr auto 1.05fr; align-items: center; padding: 0 11px 0 10px; }
  .side { display: flex; align-items: center; gap: 6px; }
  .end { justify-content: flex-end; }
  .pick { display: flex; align-items: center; height: 25px; background: #282828; border: 1px solid #3d3d3d; border-radius: 5px; padding: 0 1px 0 4px; }
  .pick select { flex: 1; padding-left: 6px; }
  .mode { width: 136px; }
  .orient { width: 99px; }
  .wtype { width: 112px; }

  .viewport { background: #000; }
  .sky, .gridbg { position: absolute; inset: 0; width: 100%; height: 100%; }
  .header3d { background: #303030; }
  .toolbar { position: relative; height: 32px; background: rgba(48, 48, 48, .74); display: flex; align-items: center; padding: 2px 8px 0 18px; }
  .selmodes { display: flex; gap: 1px; margin-left: 12px; border-radius: 4px; overflow: hidden; }
  .selmodes button { width: 23px; height: 23px; background: #545454; color: #c8c8c8; }
  .selmodes .blue { background: #4772b3; color: #fff; }
  .options { margin-left: auto; height: 25px; background: #282828; border: 1px solid #3d3d3d; border-radius: 5px; padding: 0 1px 0 8px; gap: 4px; }
  .scene3d { position: relative; }
  .edge { position: absolute; top: 18px; width: 8px; height: 18px; background: #1b1b1b; color: #c0c0c0; }
  .e-left { left: 0; border-radius: 0 4px 4px 0; }
  .e-right { right: 0; border-radius: 4px 0 0 4px; }
  .nodeed .edge { top: 49px; z-index: 2; }
  .gizmo { position: absolute; right: 10px; top: 14px; text-shadow: none; }
  .gizmo text { font: bold 13px "DejaVu Sans", sans-serif; fill: #111c; }
  .nav { position: absolute; right: 11px; top: 114px; display: grid; gap: 3px; }
  .nav button { width: 34px; height: 34px; border-radius: 50%; background: #111; color: #e4e4e4; }
  .mouse { position: absolute; left: 33px; top: 258px; }

  .nodeed { background: #1d1d1d; }
  .nodeed .bar { height: 32px; padding-left: 9px; }
  .usenodes { display: flex; align-items: center; margin-left: 9px; gap: 4px; color: #fff; white-space: nowrap; }
  .usenodes input { appearance: none; width: 0; height: 0; margin-right: -4px; }
  .tick { width: 18px; height: 18px; border-radius: 4px; background: #4772b3; }
  .idnode { width: 265px; }
  .plain { background: none; }
  .idnode + .plain { margin-left: 2px; }
  .dimpin { color: #8c8c8c; }
  .crumbs { display: flex; align-items: center; }
  .crumbs span { margin: 0 12px 0 10px; }
  .crumbs .ic:nth-of-type(2) { margin-right: 4px; }
  .nodecrumbs { position: relative; padding: 17px 22px; }
  .vscroll { position: absolute; right: 1px; top: 43px; bottom: 12px; width: 5px; border-radius: 3px; background: #303030; }
  .hscroll { position: absolute; left: 8px; right: 12px; bottom: 2px; height: 5px; border-radius: 3px; background: #353535; }

  .node { position: absolute; width: 131px; background: #303030; border-radius: 4px; font-size: 10px; line-height: 12px; box-shadow: 0 2px 7px 1px rgba(0, 0, 0, .6); }
  .active { outline: 1px solid #fff; }
  .node header { height: 19px; display: flex; align-items: center; padding: 0 4px 0 7px; gap: 3px; border-radius: 4px 4px 0 0; border-bottom: 1px solid rgba(0, 0, 0, .25); color: #eee; }
  .node header > .ic { opacity: .7; }
  .input { background: #83314a; }
  .vector { background: #3c3c83; }
  .group { background: #344621; }
  .shader { background: #2b652b; }
  .output { background: #3c1d26; }
  .tree { margin-left: auto; display: flex; align-items: flex-end; height: 17px; }
  .tree .ic { margin-bottom: 3px; }
  .tree small { font-size: 9px; line-height: 9px; margin-left: -2px; }
  .nbody { padding: 3px 10px 4px; }
  .row { position: relative; display: flex; align-items: center; height: 21px; }
  .out { justify-content: flex-end; }
  .sock { position: absolute; left: -14px; width: 8px; height: 8px; border-radius: 50%; box-shadow: 0 0 0 1px #161616; }
  .out .sock { left: auto; right: -14px; }
  .out + .sel { margin-top: 10px; }
  .out + .labelled { margin-top: 9px; }
  .out + .id, .out + .object { margin-top: 9px; }
  .out + .in { margin-top: 2px; }
  .sel { height: 19px; margin-bottom: 3px; }
  .labelled { margin-bottom: 2px; }
  .sel:first-child { margin-top: 1px; }
  .lab { width: 38px; flex: none; }
  .npick { flex: 1; height: 100%; display: flex; align-items: center; border: 1px solid #3d3d3d; border-radius: 4px; background: #282828; padding: 0 0 0 6px; }
  .npick select { flex: 1; }
  .fld { flex: 1; display: flex; align-items: center; height: 18px; background: #545454; border-radius: 3px; padding: 0 12px 0 14px; box-shadow: 0 0 0 1px #3a3a3a; }
  .fld input { flex: 1; text-align: right; }
  .vec { flex-direction: column; align-items: stretch; height: auto; gap: 1px; }
  .vec .fld { flex: none; height: 18px; border-radius: 0; }
  .vec .fld:first-child { border-radius: 3px 3px 0 0; }
  .vec .fld:last-child { border-radius: 0 0 3px 3px; }
  .id { height: 18px; margin-bottom: 3px; border: 1px solid #3d3d3d; border-radius: 3px; overflow: hidden; background: #282828; gap: 1px; align-items: stretch; }
  .id .drop { width: 28px; }
  .id > input { flex: 1; text-align: center; background: #1d1d1d; }
  .id .grey { width: 21px; }
  .id .soft { width: 18px; }
  .object { gap: 4px; height: 18px; margin-bottom: 3px; }
  .objfield { flex: 1; height: 18px; background: #1d1d1d; border: 1px solid #3d3d3d; border-radius: 4px; justify-content: space-between; padding: 0 3px; }
  .inst { display: flex; align-items: center; gap: 2px; }
  .inst input { appearance: none; width: 13px; height: 13px; border-radius: 2px; background: #545454; }

  .outliner { background: #282828; }
  .right .bar { display: flex; background: #303030; gap: 7px; }
  .outliner .bar { padding-right: 0; }
  .search { display: flex; align-items: center; height: 25px; border: 1px solid #3d3d3d; border-radius: 5px; background: #1d1d1d; padding-left: 4px; width: 143px; flex: none; margin: 0 13px 0 12px; }
  .search input { flex: 1; }
  .list { height: 92px; overflow: hidden; position: relative; }
  .list ul { list-style: none; margin-top: -15px; }
  .list li { height: 25px; display: flex; align-items: center; padding: 0 14px 0 54px; color: #777; }
  .list li:nth-child(odd) { background: #2b2b2b; }
  .list li:not(.coll) { background-image: linear-gradient(#5a5a5a, #5a5a5a); background-size: 1px 100%; background-position: 36px 0; background-repeat: no-repeat; }
  .list .coll { padding-left: 32px; color: #e2e2e2; gap: 6px; }
  .tri { width: 23px; }
  .coll .tri { width: 14px; margin-right: -2px; }
  .brown { color: #80583a; margin-right: 7px; }
  .nm { width: 93px; }
  .short { width: 51px; }
  .mid { width: 60px; }
  .cons { color: #3d5a94; margin-right: 2px; }
  .green { color: #1a7c62; width: 24px; height: 23px; border-radius: 5px; display: grid; place-items: center; }
  .hl { background: #545454; color: #1f9a7c; }
  .vis { margin-left: auto; display: flex; align-items: center; gap: 5px; color: #e2e2e2; }
  .vis .ic:nth-last-child(2) { color: #aaa; }
  .ck { width: 14px; height: 14px; background: #e2e2e2; }
  .lscroll { position: absolute; right: 2px; top: 16px; width: 5px; height: 34px; border-radius: 3px; background: #3a3a3a; }

  .props { background: #303030; display: flex; flex-direction: column; }
  .props .bar { padding: 0 10px; flex: none; }
  .props .search { margin: 0 0 0 32px; }
  .props .bar > .grp:last-child { margin-left: auto; }
  .pcols { flex: 1; display: flex; }
  .ptabs { width: 35px; background: #1d1d1d; padding-top: 10px; display: flex; flex-direction: column; gap: 8px; }
  .ptabs button { width: 33px; height: 35px; margin-left: 2px; border-radius: 5px 0 0 5px; }
  .ptabs .on { background: #303030; }
  .pbody { flex: 1; padding: 11px 9px 0 10px; min-width: 0; }
  .pbody .crumbs { height: 24px; padding: 0 2px 0 3px; }
  .pbody .crumbs .plain { margin-left: auto; }
  .idprop { margin-top: 20px; }
  .panels { margin-top: 12px; display: grid; gap: 2px; }
  .panel { background: #3d3d3d; border-radius: 4px; }
  .phead { width: 100%; height: 31px; justify-content: flex-start; padding: 0 9px 0 7px; gap: 2px; }
  .phead .ic { color: #b5b5b5; }
  .grip { margin-left: auto; width: 15px; height: 7px; background: radial-gradient(circle at 1px 1px, #a0a0a0 1px, transparent 1px) 0 0 / 4px 4px; }
  .big { width: calc(100% - 22px); margin: 11px 11px 0; height: 24px; border-radius: 4px; padding: 0 4px; }
  .big span { flex: 1; text-align: center; }
  .prows { padding: 20px 11px 10px; display: grid; gap: 7px; }
  .prow { display: grid; grid-template-columns: 20px 67px 132px 1fr; align-items: center; height: 24px; column-gap: 0; }
  .space { margin-bottom: 13px; }
  .ptri { padding-left: 3px; }
  .plab { text-align: right; }
  .pval, .ppick, .pnum { margin-left: 11px; width: 132px; height: 24px; border-radius: 4px; background: #282828; display: flex; align-items: center; justify-content: flex-start; gap: 9px; padding: 0 8px; box-shadow: 0 1px 0 #333; }
  .ppick { padding: 0 0 0 9px; }
  .ppick select { flex: 1; }
  .pnum { padding: 0; gap: 0; overflow: hidden; }
  .pnum button { width: 23px; }
  .pnum input { flex: 1; height: 100%; background: #545454; text-align: center; margin-left: 1px; }
  .dot { width: 9px; height: 9px; border-radius: 50%; box-shadow: 0 0 0 1px #111; flex: none; }
  .key { width: 5px; height: 5px; border-radius: 50%; background: #d8d8d8; margin-left: 22px; }

  .status { height: 24px; margin-top: 2px; background: #1d1d1d; display: flex; align-items: center; padding: 0 9px 0 14px; color: #909090; }
  .hint { width: 281px; display: flex; align-items: center; gap: 14px; }
  .ver { margin-left: auto; }
</style>
